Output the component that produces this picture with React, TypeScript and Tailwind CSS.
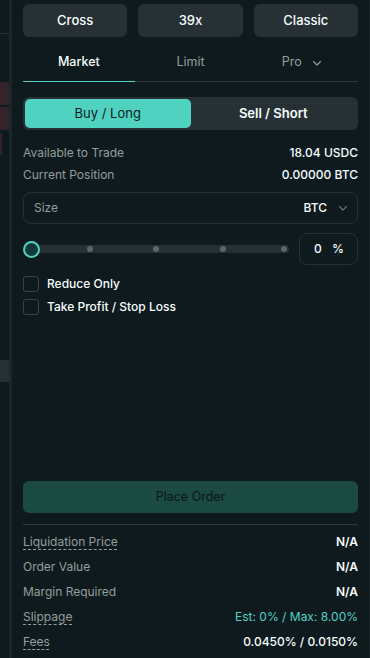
import React from "react";

function Chevron({ className }: { className?: string }) {
  return (
    <svg className={className} width="12" height="12" viewBox="0 0 12 12" fill="none">
      <path d="M2.5 4.5 L6 8 L9.5 4.5" stroke="currentColor" strokeWidth="1.1" strokeLinecap="round" strokeLinejoin="round" />
    </svg>
  );
}

function InfoRow({ label, value, dashed, valueClass }: { label: string; value: string; dashed?: boolean; valueClass?: string }) {
  return (
    <div className="h-[25px] flex items-center justify-between">
      <span
        className={
          "text-[12px] text-[#949e9c] " +
          (dashed ? "underline decoration-dashed decoration-[#949e9c] underline-offset-[3px]" : "")
        }
      >
        {label}
      </span>
      <span className={valueClass ?? "text-[12px] font-semibold text-[#f6fefd]"}>{value}</span>
    </div>
  );
}

export default function App() {
  return (
    <div
      className="w-[370px] h-[658px] flex bg-[#0f1a1f] overflow-hidden"
      style={{ fontFamily: "Inter, 'Noto Sans', sans-serif" }}
    >
      {/* left strip */}
      <div className="w-[9px] flex flex-col bg-[#0f1a1f]">
        <div className="h-[33px]" />
        <div className="h-px bg-[#2a3136]" />
        <div className="h-[48px]" />
        <div className="h-[23px] bg-[#33242b]" />
        <div className="h-[2px]" />
        <div className="h-[23px] bg-[#33242b]" />
        <div className="h-[3px]" />
        <div className="h-[22px] w-[2px] bg-[#33242b]" />
        <div className="h-[205px]" />
        <div className="h-[22px] bg-[#273035]" />
      </div>
      <div className="w-[3px] bg-[#1b252a]" />

      {/* main */}
      <div className="flex-1 flex flex-col px-[11px] pt-[4px]">
        {/* top buttons */}
        <div className="flex gap-[11px]">
          {["Cross", "39x", "Classic"].map((t) => (
            <div
              key={t}
              className="flex-1 h-[33px] rounded-[6px] bg-[#273035] flex items-center justify-center text-[13px] font-medium text-[#f6fefd]"
            >
              {t}
            </div>
          ))}
        </div>

        {/* tabs */}
        <div className="mt-[7px] h-[38px] flex border-b border-[#303a3f]">
          <div className="flex-1 flex items-center justify-center text-[12.5px] font-medium text-[#f6fefd] border-b border-[#50d2c1] -mb-px">
            Market
          </div>
          <div className="flex-1 flex items-center justify-center text-[12.5px] text-[#949e9c]">Limit</div>
          <div className="flex-1 flex items-center justify-center gap-[9px] text-[12.5px] text-[#949e9c]">
            <span>Pro</span>
            <Chevron className="text-[#949e9c]" />
          </div>
        </div>

        {/* buy / sell toggle */}
        <div className="mt-[15px] h-[33px] rounded-[6px] bg-[#273035] p-[2px] flex">
          <div className="flex-1 rounded-[5px] bg-[#50d2c1] flex items-center justify-center text-[13px] text-[#0f1a1f]">
            Buy / Long
          </div>
          <div className="flex-1 flex items-center justify-center text-[13px] font-semibold text-[#f6fefd]">
            Sell / Short
          </div>
        </div>

        {/* balances */}
        <div className="mt-[12px] h-[22px] flex items-center justify-between">
          <span className="text-[12px] text-[#949e9c]">Available to Trade</span>
          <span className="text-[12px] font-medium text-[#f6fefd]">18.04 USDC</span>
        </div>
        <div className="h-[22px] flex items-center justify-between">
          <span className="text-[12px] text-[#949e9c]">Current Position</span>
          <span className="text-[12px] font-medium text-[#f6fefd]">0.00000 BTC</span>
        </div>

        {/* size input */}
        <div className="mt-[6px] h-[32px] rounded-[8px] border border-[#273035] flex items-center justify-between pl-[10px] pr-[8px]">
          <span className="text-[12px] text-[#949e9c]">Size</span>
          <div className="flex items-center gap-[10px]">
            <span className="text-[12px] font-medium text-[#f6fefd]">BTC</span>
            <Chevron className="text-[#6b7478]" />
          </div>
        </div>

        {/* slider */}
        <div className="mt-[9px] h-[32px] flex items-center gap-[10px]">
          <div className="flex-1 relative h-[32px] flex items-center">
            <div className="absolute left-[8px] right-0 h-[8px] rounded-full bg-[#273035]" />
            {[67, 133, 200, 261].map((x) => (
              <div
                key={x}
                className="absolute w-[6px] h-[6px] rounded-full bg-[#5d6569]"
                style={{ left: x - 3 }}
              />
            ))}
            <div className="absolute left-0 w-[17px] h-[17px] rounded-full border-[2px] border-[#50d2c1] bg-[#12393a]" />
          </div>
          <div className="w-[59px] h-[32px] rounded-[8px] border border-[#273035] flex items-center pl-[14px] pr-[13px] justify-between">
            <span className="text-[12px] font-medium text-[#f6fefd]">0</span>
            <span className="text-[12px] font-medium text-[#f6fefd]">%</span>
          </div>
        </div>

        {/* checkboxes */}
        <div className="mt-[11px] flex flex-col gap-[7px]">
          {["Reduce Only", "Take Profit / Stop Loss"].map((t) => (
            <div key={t} className="h-[16px] flex items-center gap-[8px]">
              <div className="w-[16px] h-[16px] rounded-[3px] border border-[#3a4348]" />
              <span className="text-[12px] font-medium text-[#f6fefd]">{t}</span>
            </div>
          ))}
        </div>

        {/* place order */}
        <div className="mt-[166px] h-[32px] rounded-[6px] bg-[#1b4a43] flex items-center justify-center text-[12.5px] text-[#0b1616]">
          Place Order
        </div>
        <div className="mt-[11px] h-px bg-[#303a3f]" />

        <div className="mt-[4px] flex flex-col">
          <InfoRow label="Liquidation Price" value="N/A" dashed />
          <InfoRow label="Order Value" value="N/A" />
          <InfoRow label="Margin Required" value="N/A" />
          <InfoRow label="Slippage" value="Est: 0% / Max: 8.00%" dashed valueClass="text-[12px] text-[#50d2c1]" />
          <InfoRow label="Fees" value="0.0450% / 0.0150%" dashed valueClass="text-[12px] font-medium text-[#f6fefd]" />
        </div>
      </div>
      <div className="w-px bg-[#1b252a]" />
    </div>
  );
}
